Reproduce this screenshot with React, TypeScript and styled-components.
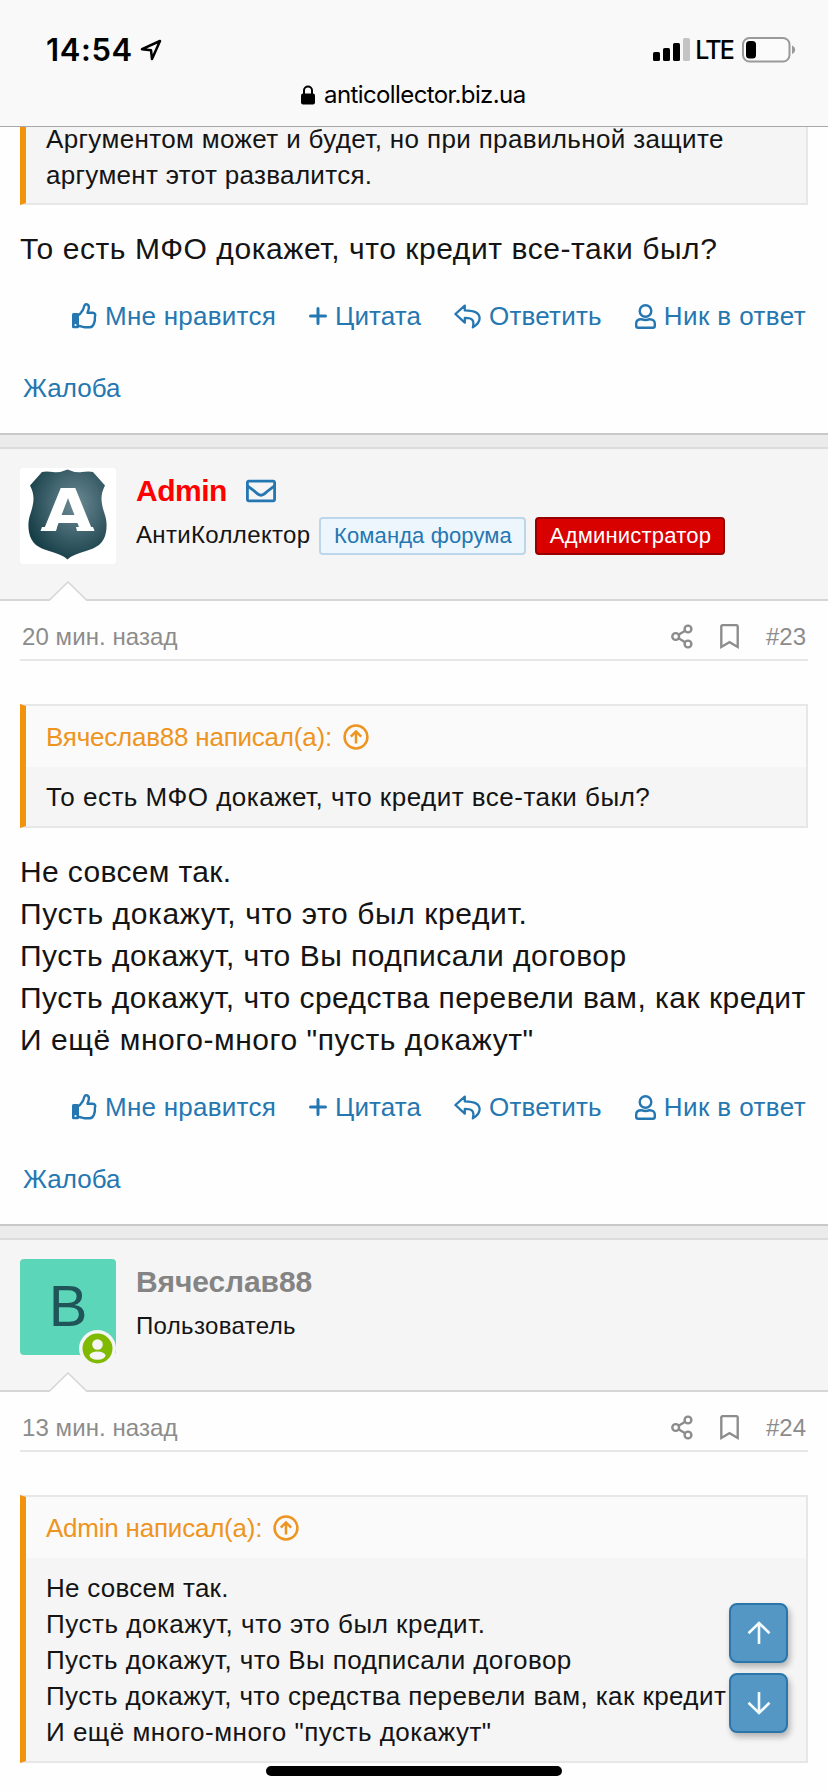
import React from "react";
import styled, { createGlobalStyle } from "styled-components";
import { FaRegEnvelope, FaRegBookmark } from "react-icons/fa";

const Global = createGlobalStyle`
  * { box-sizing: border-box; }
  body {
    margin: 0;
    background: #fefefe;
    color: #141414;
    font-family: "Liberation Sans", Arial, sans-serif;
    overflow: hidden;
  }
  svg { display: block; flex: none; }
`;

const Screen = styled.div`
  position: relative;
  width: 828px;
  height: 1792px;
  overflow: hidden;
  display: flex;
  flex-direction: column;
`;

const BrowserBar = styled.header`
  height: 127px;
  flex: none;
  background: #f9f9f9;
  border-bottom: 1px solid #a9a9ab;
  font-family: Inter, sans-serif;
  color: #000;
`;

const StatusRow = styled.div`
  height: 77px;
  padding: 22px 32px 0 46px;
  display: flex;
  align-items: center;
  justify-content: space-between;
`;

const StatusGroup = styled.div<{ $gap: number }>`
  display: flex;
  align-items: center;
  gap: ${(p) => p.$gap}px;
`;

const Clock = styled.span`
  font-size: 31px;
  font-weight: 600;
  line-height: 36px;
  letter-spacing: 0.6px;
`;

const Network = styled.span`
  margin: 0 2px 0 -2px;
  font-size: 25px;
  font-weight: 500;
  line-height: 30px;
  letter-spacing: -1.8px;
`;

const AddressRow = styled.div`
  height: 36px;
  display: flex;
  align-items: center;
  gap: 9px;
  padding-left: 301px;
  font-size: 24px;
  line-height: 36px;
`;

const Address = styled.span`
  letter-spacing: -0.6px;
`;

const Thread = styled.main`
  flex: 1;
  min-height: 0;
`;

const Post = styled.article`
  display: flow-root;
  border-bottom: 2px solid #c9c9c9;
`;

const Divider = styled.div`
  height: 14px;
  background: #ebebeb;
  border-bottom: 2px solid #dcdcdc;
`;

const UserHeader = styled.div`
  position: relative;
  height: 152px;
  padding: 19px 20px 0;
  background: #f5f5f5;
  border-bottom: 2px solid #d6d6d6;
  display: flex;
  gap: 20px;
`;

const Notch = styled.svg`
  position: absolute;
  left: 48px;
  bottom: -2px;
`;

const Avatar = styled.div<{ $bg: string }>`
  position: relative;
  width: 96px;
  height: 96px;
  flex: none;
  border-radius: 4px;
  background: ${(p) => p.$bg};
  color: #1f5559;
  font-size: 58px;
  line-height: 93px;
  text-align: center;
`;

const OnlineMark = styled.svg`
  position: absolute;
  left: 59px;
  top: 71px;
`;

const UserInfo = styled.div`
  padding-top: 4px;
`;

const NameRow = styled.div`
  display: flex;
  align-items: center;
  height: 38px;
  gap: 19px;
  color: #2577b1;
`;

const UserName = styled.span<{ $color: string; $spacing: number }>`
  color: ${(p) => p.$color};
  font-size: 30px;
  font-weight: 700;
  line-height: 38px;
  letter-spacing: ${(p) => p.$spacing}px;
`;

const TitleRow = styled.div`
  display: flex;
  align-items: center;
  margin-top: 7px;
  height: 38px;
  gap: 9px;
  font-size: 24px;
`;

const UserTitle = styled.span`
  letter-spacing: 0.34px;
  line-height: 36px;
  padding-bottom: 2px;
  white-space: nowrap;
`;

const Badge = styled.span<{ $admin?: boolean }>`
  height: 38px;
  width: ${(p) => (p.$admin ? 190 : 207)}px;
  border: 2px solid ${(p) => (p.$admin ? "#960000" : "#bcd7e9")};
  border-radius: 4px;
  background: ${(p) => (p.$admin ? "#d90000" : "#edf6fd")};
  color: ${(p) => (p.$admin ? "#fff" : "#2577b1")};
  font-size: 22px;
  line-height: 34px;
  text-align: center;
  white-space: nowrap;
  letter-spacing: ${(p) => (p.$admin ? 0.2 : 0.12)}px;
`;

const MetaRow = styled.div`
  height: 60px;
  margin: 0 20px;
  padding: 14px 2px 0;
  border-bottom: 2px solid #e7e7e7;
  display: flex;
  justify-content: space-between;
  color: #8c8c8c;
  font-size: 24px;
  line-height: 44px;
`;

const Time = styled.span`
  letter-spacing: 0.08px;
`;

const MetaTools = styled.div`
  display: flex;
  align-items: center;
  height: 44px;

  svg {
    margin-bottom: 2px;
  }
`;

const Bookmark = styled(FaRegBookmark)`
  margin: 0 24px;
`;

const Quote = styled.blockquote<{ $top: number; $clipped?: boolean }>`
  margin: ${(p) => p.$top}px 20px 0;
  border: 2px solid #e7e7e7;
  border-top-width: ${(p) => (p.$clipped ? 0 : 2)}px;
  border-left: 6px solid #f2930d;
  background: #f5f5f5;
  font-size: 26px;
  line-height: 36px;
`;

const QuoteTitle = styled.div`
  height: 61px;
  padding: 0 20px;
  display: flex;
  align-items: center;
  gap: 11px;
  background: #fafafa;
  color: #ee9420;
  letter-spacing: -0.22px;
`;

const QuoteText = styled.div<{ $top: number; $bottom: number }>`
  padding: ${(p) => p.$top}px 20px ${(p) => p.$bottom}px;
  white-space: nowrap;
`;

const Line = styled.div<{ $spacing: number; $height?: number }>`
  letter-spacing: ${(p) => p.$spacing}px;
  ${(p) => p.$height && `line-height: ${p.$height}px;`}
`;

const Message = styled.div`
  margin: 23px 20px 0;
  font-size: 30px;
  line-height: 42px;
  white-space: nowrap;
`;

const Actions = styled.div`
  margin-top: 26px;
  padding: 0 22px 0 72px;
  height: 40px;
  display: flex;
  align-items: center;
  justify-content: space-between;
  color: #2577b1;
  font-size: 26px;
`;

const Action = styled.a<{ $gap: number; $spacing: number }>`
  display: flex;
  align-items: center;
  gap: ${(p) => p.$gap}px;
  letter-spacing: ${(p) => p.$spacing}px;
  white-space: nowrap;
`;

const Report = styled.div`
  margin-top: 32px;
  padding-left: 23px;
  height: 65px;
  color: #2577b1;
  font-size: 26px;
  line-height: 40px;
`;

const ScrollButtons = styled.div`
  position: absolute;
  left: 729px;
  top: 1603px;
  display: flex;
  flex-direction: column;
  gap: 10px;
`;

const ScrollButton = styled.button`
  width: 59px;
  height: 60px;
  padding: 0;
  border: 2px solid #2a76ab;
  border-radius: 8px;
  background: #5497c5;
  box-shadow: 2px 4px 6px rgba(0, 0, 0, 0.28);
  display: flex;
  align-items: center;
  justify-content: center;
`;

const HomeIndicator = styled.div`
  position: absolute;
  left: 266px;
  top: 1766px;
  width: 296px;
  height: 10px;
  border-radius: 5px;
  background: #000;
`;

const LocationIcon = () => (
  <svg width="22" height="22" viewBox="0 0 22 22">
    <path d="M2 10.2 20 2 12 20 11 11.2Z" fill="none" stroke="#000" strokeWidth="2.5" strokeLinejoin="round" />
  </svg>
);

const SignalIcon = () => (
  <svg width="37" height="24" viewBox="0 0 37 24">
    <rect x="0" y="14" width="7" height="9" rx="1.6" />
    <rect x="10" y="10" width="7" height="13" rx="1.6" />
    <rect x="20" y="5" width="7" height="18" rx="1.6" />
    <rect x="30" y="0" width="7" height="23" rx="1.6" fill="#c4c4c4" />
  </svg>
);

const BatteryIcon = () => (
  <svg width="54" height="26" viewBox="0 0 54 26">
    <rect x="1" y="1" width="46.5" height="23.5" rx="6.5" fill="#fbfbfb" stroke="#9a9a9a" strokeWidth="2" />
    <rect x="4" y="4" width="10" height="17.5" rx="3.5" />
    <path d="M50 8.5c4.2 1.5 4.2 7 0 8.5z" fill="#9a9a9a" />
  </svg>
);

const LockIcon = () => (
  <svg width="14" height="20" viewBox="0 0 14 20">
    <path d="M3 10V5.5a4 4 0 0 1 8 0V10" fill="none" stroke="#000" strokeWidth="2" />
    <rect x="0" y="8.5" width="14" height="11" rx="2" />
  </svg>
);

const ThumbIcon = () => (
  <svg width="25" height="26" viewBox="0 0 25 26">
    <path
      d="M6 12.3C8.5 11.5 9.5 9 10.8 7 12 5 12 1.3 14 1.3 17.6 1.3 17.6 5 15.5 9.8H20.5C23.2 9.8 23.8 12 22.9 13.8 23.3 18.5 21.5 24.2 18 24.2H12.5C9.5 24.2 8.5 22.8 6 22.8"
      fill="none"
      stroke="currentColor"
      strokeWidth="2.4"
      strokeLinejoin="round"
    />
    <path d="M1.5 10H5.5Q7 10 7 11.5V23.8Q7 25.3 5.5 25.3H1.5Q0 25.3 0 23.8V11.5Q0 10 1.5 10Z" fill="currentColor" />
    <circle cx="3.5" cy="22" r="1.1" fill="#fefefe" />
  </svg>
);

const PlusIcon = () => (
  <svg width="18" height="18" viewBox="0 0 18 18">
    <path d="M9 1.5V16.5M1.5 9H16.5" stroke="currentColor" strokeWidth="3" strokeLinecap="round" />
  </svg>
);

const ReplyIcon = () => (
  <svg width="27" height="25" viewBox="0 0 27 25" fill="none" stroke="currentColor" strokeWidth="2.3" strokeLinejoin="round">
    <path d="M10.8 1.6 1.4 10 10.8 18.6V13.9C17.5 13.9 20.8 15.5 18.9 23.3 22.8 21 25.6 18 25.6 14.3 25.6 8.3 19.5 6.5 10.8 6.4Z" />
  </svg>
);

const PersonIcon = () => (
  <svg width="21" height="25" viewBox="0 0 21 25" fill="none" stroke="currentColor" strokeWidth="2.4" strokeLinejoin="round">
    <circle cx="10.5" cy="7" r="5.8" />
    <path d="M6.3 15.2C3 15.2 1.2 17 1.2 19.5V21.7Q1.2 23.7 3.2 23.7H17.8Q19.8 23.7 19.8 21.7V19.5C19.8 17 18 15.2 14.7 15.2 12 16.3 9 16.3 6.3 15.2Z" />
  </svg>
);

const ShareIcon = () => (
  <svg width="22" height="25" viewBox="0 0 22 25" fill="none" stroke="currentColor" strokeWidth="2.4">
    <circle cx="4.7" cy="12.5" r="3.4" />
    <circle cx="17" cy="5" r="3.4" />
    <circle cx="17" cy="20" r="3.4" />
    <path d="M7.6 10.7 14.1 6.8M7.6 14.3 14.1 18.2" />
  </svg>
);

const CircleUpIcon = () => (
  <svg width="26" height="26" viewBox="0 0 26 26" fill="none" stroke="currentColor" strokeWidth="2.5">
    <circle cx="13" cy="13" r="11.4" />
    <path d="M13 19.5V7.5M7.8 12.6 13 7.4 18.2 12.6" />
  </svg>
);

const ArrowIcon = ({ down = false }: { down?: boolean }) => (
  <svg width="24" height="24" viewBox="0 0 24 24" fill="none" stroke="#f4fbff" strokeWidth="2.6">
    <path d={down ? "M12 1V22M1.5 11.8 12 22 22.5 11.8" : "M12 23V2M1.5 12.2 12 2 22.5 12.2"} />
  </svg>
);

const NotchShape = () => (
  <Notch width="40" height="20" viewBox="0 0 40 20">
    <path d="M1 20 20 1.5 39 20Z" fill="#fefefe" />
    <path d="M1 19.5 20 1 39 19.5" fill="none" stroke="#d6d6d6" strokeWidth="1.5" />
  </Notch>
);

const ShieldLogo = () => (
  <svg width="96" height="96" viewBox="0 0 96 96">
    <defs>
      <radialGradient id="shield" cx="60%" cy="38%" r="65%">
        <stop offset="0" stopColor="#6d8b94" />
        <stop offset="0.5" stopColor="#426570" />
        <stop offset="1" stopColor="#173f48" />
      </radialGradient>
    </defs>
    <path
      d="M47.5 1.5Q55 5 62 4 69 3 73 4L85 17.5C80 27 81 34 84 44 87 52 87 58 86 64 84 76 76 80 66 83 57 86 51 88 47.5 91.5 44 88 38 86 29 83 19 80 11 76 9 64 8 58 8 52 11 44 14 34 15 27 10 17.5L22 4Q26 3 33 4 40 5 47.5 1.5Z"
      fill="url(#shield)"
    />
    <text
      x="48"
      y="63"
      textAnchor="middle"
      fontFamily="DejaVu Sans, sans-serif"
      fontWeight="700"
      fontSize="58"
      fill="#fff"
      textLength="50"
      lengthAdjust="spacingAndGlyphs"
    >
      A
    </text>
    <path d="M20.5 63 22 59H37L36 63ZM57 63 56 59H73L74.5 63Z" fill="#fff" />
  </svg>
);

const PostActions = () => (
  <>
    <Actions>
      <Action $gap={8} $spacing={0.25}>
        <ThumbIcon />
        Мне нравится
      </Action>
      <Action $gap={8} $spacing={0.1}>
        <PlusIcon />
        Цитата
      </Action>
      <Action $gap={8} $spacing={0.2}>
        <ReplyIcon />
        Ответить
      </Action>
      <Action $gap={8} $spacing={0.4}>
        <PersonIcon />
        Ник в ответ
      </Action>
    </Actions>
    <Report>Жалоба</Report>
  </>
);

const PostMeta = ({ time, number }: { time: string; number: string }) => (
  <MetaRow>
    <Time>{time}</Time>
    <MetaTools>
      <ShareIcon />
      <Bookmark size={25} />
      {number}
    </MetaTools>
  </MetaRow>
);

const answer = [
  { text: "Не совсем так.", body: 0.36, quoted: 0.27 },
  { text: "Пусть докажут, что это был кредит.", body: 0.61, quoted: 0.52 },
  { text: "Пусть докажут, что Вы подписали договор", body: 0.5, quoted: 0.43 },
  { text: "Пусть докажут, что средства перевели вам, как кредит", body: 0.49, quoted: 0.41 },
  { text: 'И ещё много-много "пусть докажут"', body: 0.57, quoted: 0.5 },
];

export default function App() {
  return (
    <Screen>
      <Global />
      <BrowserBar>
        <StatusRow>
          <StatusGroup $gap={7}>
            <Clock>14:54</Clock>
            <LocationIcon />
          </StatusGroup>
          <StatusGroup $gap={7}>
            <SignalIcon />
            <Network>LTE</Network>
            <BatteryIcon />
          </StatusGroup>
        </StatusRow>
        <AddressRow>
          <LockIcon />
          <Address>anticollector.biz.ua</Address>
        </AddressRow>
      </BrowserBar>

      <Thread>
        <Post>
          <Quote $top={0} $clipped>
            <QuoteText $top={0} $bottom={4}>
              <Line $spacing={0.36} $height={24}>
                Аргументом может и будет, но при правильной защите
              </Line>
              <Line $spacing={0.32} $height={48}>
                аргумент этот развалится.
              </Line>
            </QuoteText>
          </Quote>
          <Message>
            <Line $spacing={0.57}>То есть МФО докажет, что кредит все-таки был?</Line>
          </Message>
          <PostActions />
        </Post>

        <Divider />
        <Post>
          <UserHeader>
            <Avatar $bg="#fff">
              <ShieldLogo />
            </Avatar>
            <UserInfo>
              <NameRow>
                <UserName $color="#fe0000" $spacing={-0.5}>Admin</UserName>
                <FaRegEnvelope size={30} />
              </NameRow>
              <TitleRow>
                <UserTitle>АнтиКоллектор</UserTitle>
                <Badge>Команда форума</Badge>
                <Badge $admin>Администратор</Badge>
              </TitleRow>
            </UserInfo>
            <NotchShape />
          </UserHeader>
          <PostMeta time="20 мин. назад" number="#23" />
          <Quote $top={43}>
            <QuoteTitle>
              Вячеслав88 написал(а):
              <CircleUpIcon />
            </QuoteTitle>
            <QuoteText $top={12} $bottom={11}>
              <Line $spacing={0.49}>То есть МФО докажет, что кредит все-таки был?</Line>
            </QuoteText>
          </Quote>
          <Message>
            {answer.map((line) => (
              <Line key={line.text} $spacing={line.body}>{line.text}</Line>
            ))}
          </Message>
          <PostActions />
        </Post>

        <Divider />
        <UserHeader>
          <Avatar $bg="#5cd6b8">
            В
            <OnlineMark width="37" height="37" viewBox="0 0 37 37">
              <circle cx="18.5" cy="18.5" r="18.5" fill="#f5f5f5" />
              <circle cx="18.5" cy="18.5" r="15" fill="#7fb900" />
              <circle cx="18.5" cy="14.5" r="5.3" fill="#f5f5f5" />
              <ellipse cx="18.5" cy="25.6" rx="8" ry="4.2" fill="#f5f5f5" />
            </OnlineMark>
          </Avatar>
          <UserInfo>
            <NameRow>
              <UserName $color="#848484" $spacing={-0.1}>Вячеслав88</UserName>
            </NameRow>
            <TitleRow>
              <UserTitle>Пользователь</UserTitle>
            </TitleRow>
          </UserInfo>
          <NotchShape />
        </UserHeader>
        <PostMeta time="13 мин. назад" number="#24" />
        <Quote $top={43}>
          <QuoteTitle>
            Admin написал(а):
            <CircleUpIcon />
          </QuoteTitle>
          <QuoteText $top={12} $bottom={11}>
            {answer.map((line) => (
              <Line key={line.text} $spacing={line.quoted}>{line.text}</Line>
            ))}
          </QuoteText>
        </Quote>
      </Thread>

      <ScrollButtons>
        <ScrollButton aria-label="Вверх">
          <ArrowIcon />
        </ScrollButton>
        <ScrollButton aria-label="Вниз">
          <ArrowIcon down />
        </ScrollButton>
      </ScrollButtons>
      <HomeIndicator />
    </Screen>
  );
}
